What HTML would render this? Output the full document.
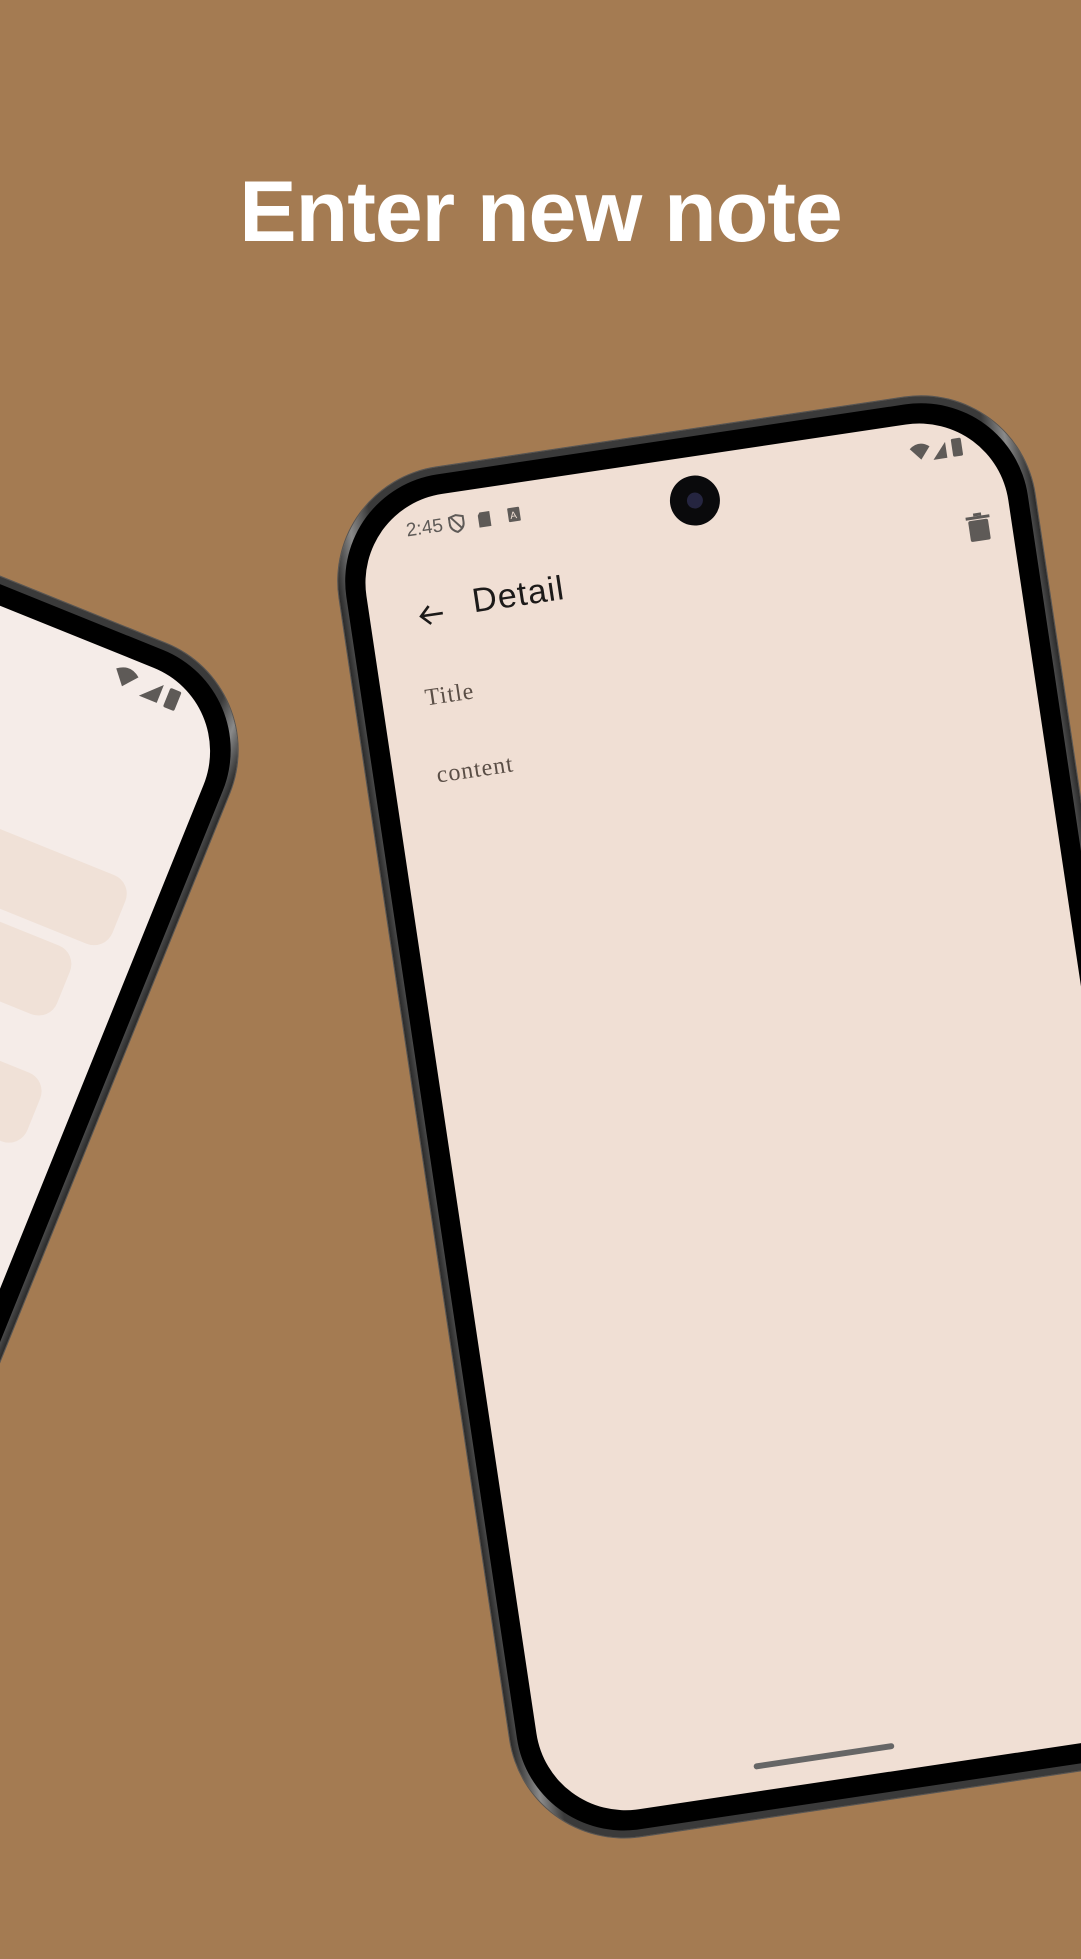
<!DOCTYPE html>
<html><head><meta charset="utf-8"><style>
html,body{margin:0;padding:0}
body{width:1081px;height:1924px;background:#a47b52;position:relative;overflow:hidden;font-family:"Liberation Sans",sans-serif}
h1{position:absolute;left:0;width:1081px;top:162px;margin:0;text-align:center;color:#fff;font-size:86px;font-weight:bold;line-height:100px;letter-spacing:-1px}
.phone{position:absolute;width:703px;height:1372px;border-radius:115px;background:linear-gradient(90deg,#2a2a2a,#8a8a8a 3%,#3a3a3a 6%,#3a3a3a 94%,#8a8a8a 97%,#2a2a2a);box-shadow:0 0 0 1px #555}
.bez{position:absolute;left:7px;top:7px;right:7px;bottom:7px;border-radius:108px;background:#000}
.scr{position:absolute;left:27px;top:27px;right:27px;bottom:27px;border-radius:90px;overflow:hidden}
.abs{position:absolute}
</style></head><body>
<h1>Enter new note</h1>

<div class="phone" style="left:-662px;top:505px;transform:rotate(22deg)">
 <div class="bez"></div>
 <div class="scr" style="background:#f5ece8">
  <svg class="abs" style="left:522px;top:7px" width="84" height="32" viewBox="0 0 70 26" fill="#5e5a57">
   <path d="M2 6 Q12 -2 22 6 L12 18Z"/><path d="M28 20 L44 4 L44 20Z"/><rect x="50" y="4" width="10" height="17" rx="1.5"/>
  </svg>
  <div class="abs" style="left:-10px;top:207px;width:630px;height:74px;border-radius:20px;background:#f0e1d7"></div>
  <div class="abs" style="left:-10px;top:293px;width:605px;height:74px;border-radius:20px;background:#f0e1d7"></div>
  <div class="abs" style="left:-10px;top:422px;width:625px;height:74px;border-radius:20px;background:#f0e1d7"></div>
 </div>
</div>

<div class="phone" style="left:420px;top:425px;height:1384px;transform-origin:351px 686px;transform:rotate(-8.5deg)">
 <div class="bez"></div>
 <div class="scr" style="background:#f0dfd4">
  <div class="abs" style="left:49px;top:21px;font-size:19px;color:#5e5a57">2:45</div>
  <svg class="abs" style="left:92px;top:21px" width="80" height="22" viewBox="0 0 80 22" fill="#5e5a57">
   <path d="M8 2 L15 4 L15 10 Q15 16 8 19 Q1 16 1 10 L1 4Z" fill="none" stroke="#5e5a57" stroke-width="2"/>
   <path d="M3 4 L13 16" stroke="#5e5a57" stroke-width="2"/>
   <path d="M32 3 L42 3 L42 18 L30 18 L30 6Z"/>
   <rect x="60" y="3" width="12" height="14" rx="1"/><text x="62" y="14" font-size="10" fill="#f0dfd4" font-family="Liberation Sans">A</text>
  </svg>
  <div class="abs" style="left:314px;top:19px;width:50px;height:50px;border-radius:50%;background:#0a0a0c"><div style="position:absolute;left:17px;top:17px;width:16px;height:16px;border-radius:50%;background:#252540"></div></div>
  <svg class="abs" style="left:557px;top:19px" width="70" height="24" viewBox="0 0 70 24" fill="#5e5a57">
   <path d="M2 6 Q12 -2 22 6 L12 18Z"/><path d="M24 20 L38 4 L38 20Z"/><rect x="44" y="2" width="10" height="18" rx="1.5"/>
  </svg>
  <svg class="abs" style="left:603px;top:97px" width="26" height="30" viewBox="0 0 26 30" fill="#5e5a57">
   <rect x="3" y="8" width="20" height="21" rx="2"/><rect x="1" y="4" width="24" height="3"/><rect x="9" y="1" width="8" height="3"/>
  </svg>
  <svg class="abs" style="left:47px;top:103px" width="30" height="30" viewBox="0 0 30 30" fill="none" stroke="#1c1a19" stroke-width="2.6">
   <path d="M26 15 H5 M13 6 L4 15 L13 24"/>
  </svg>
  <div class="abs" style="left:104px;top:92px;font-size:34px;color:#1c1a19;letter-spacing:1px">Detail</div>
  <div class="abs" style="left:43px;top:187px;font-size:24px;color:#5a4e46;font-family:'Liberation Serif',serif;letter-spacing:1px">Title</div>
  <div class="abs" style="left:43px;top:265px;font-size:24px;color:#5a4e46;font-family:'Liberation Serif',serif;letter-spacing:1px">content</div>
  <div class="abs" style="left:210px;top:1302px;width:142px;height:6px;border-radius:3px;background:#666"></div>
 </div>
</div>
</body></html>
